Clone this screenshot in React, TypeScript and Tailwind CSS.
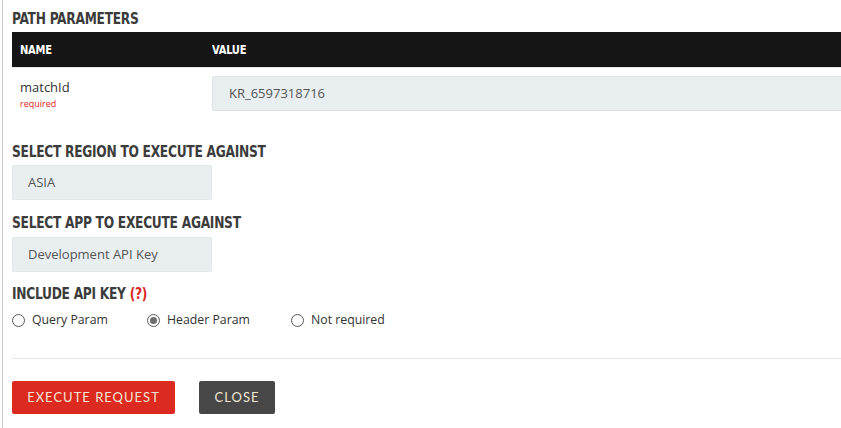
import { useState } from "react";

const heading =
  "origin-left scale-x-[0.907] whitespace-nowrap font-['DejaVu_Sans_Condensed',sans-serif] font-bold text-[15px] leading-[19px] text-[#3c3c3c] tracking-[-0.3px]";

function Radio({ label, checked, onClick }: { label: string; checked: boolean; onClick: () => void }) {
  return (
    <label className="flex items-center gap-[7px] cursor-pointer" onClick={onClick}>
      <span className="w-[13px] h-[13px] rounded-full border border-[#5a5a5a] bg-white flex items-center justify-center">
        {checked && <span className="w-[7px] h-[7px] rounded-full bg-[#6d6d6d]" />}
      </span>
      <span>{label}</span>
    </label>
  );
}

export default function App() {
  const [mode, setMode] = useState("header");

  return (
    <div className="w-[841px] h-[428px] bg-white overflow-hidden font-['Open_Sans',sans-serif] text-[#333]">
      <div className="ml-[2px] border-l border-[#c8c8c8] h-full pl-[9px] pt-[10px]">
        <div className="flex">
          <h3 className={heading}>PATH PARAMETERS</h3>
        </div>

        <div className="mt-[3px] w-[900px]">
          <div className="h-[35px] bg-[#151515] flex items-center text-white font-['DejaVu_Sans_Condensed',sans-serif] font-bold text-[13px] tracking-[-0.3px]">
            <div className="w-[200px] pl-[8px] flex">
              <span className="origin-left scale-x-[0.85]">NAME</span>
            </div>
            <div className="flex">
              <span className="origin-left scale-x-[0.85]">VALUE</span>
            </div>
          </div>
          <div className="border-t border-[#e6e6e6] flex pt-[8px]">
            <div className="w-[200px] pl-[8px] pt-[2px]">
              <div className="text-[13px] leading-[18px] text-[#333]">matchId</div>
              <div className="mt-[1px] text-[9px] leading-[14px] text-[#e02020]">required</div>
            </div>
            <div className="flex-1 h-[35px] bg-[#e9eef1] border border-[#dde2e5] rounded-[2px] pl-[16px] flex items-center text-[13px] text-[#555]">
              KR_6597318716
            </div>
          </div>
        </div>

        <div className="mt-[32px] flex">
          <h3 className={heading}>SELECT REGION TO EXECUTE AGAINST</h3>
        </div>
        <div className="mt-[3px] w-[200px] h-[35px] bg-[#e9eef1] border border-[#e3e7ea] rounded-[2px] pl-[15px] flex items-center text-[13px] text-[#555]">
          ASIA
        </div>

        <div className="mt-[14px] flex">
          <h3 className={heading}>SELECT APP TO EXECUTE AGAINST</h3>
        </div>
        <div className="mt-[4px] w-[200px] h-[35px] bg-[#e9eef1] border border-[#e3e7ea] rounded-[2px] pl-[15px] flex items-center text-[13px] text-[#555]">
          Development API Key
        </div>

        <div className="mt-[13px] flex">
          <h3 className={heading}>
            INCLUDE API KEY <span className="text-[#d9281f]">(?)</span>
          </h3>
        </div>
        <div className="mt-[7px] h-[18px] flex items-center text-[12.3px] text-[#333]">
          <div className="w-[135px]">
            <Radio label="Query Param" checked={mode === "query"} onClick={() => setMode("query")} />
          </div>
          <div className="w-[144px]">
            <Radio label="Header Param" checked={mode === "header"} onClick={() => setMode("header")} />
          </div>
          <Radio label="Not required" checked={mode === "none"} onClick={() => setMode("none")} />
        </div>

        <div className="mt-[29px] border-t border-[#e2e6e8] w-[900px]" />

        <div className="mt-[22px] flex gap-[24px] font-['Lato',sans-serif] text-[13px] tracking-[1px] text-[#f0e6d2]">
          <button className="w-[163px] h-[33px] bg-[#dc2a20] rounded-[2px]">EXECUTE REQUEST</button>
          <button className="w-[76px] h-[33px] bg-[#474747] rounded-[2px]">CLOSE</button>
        </div>
      </div>
    </div>
  );
}
